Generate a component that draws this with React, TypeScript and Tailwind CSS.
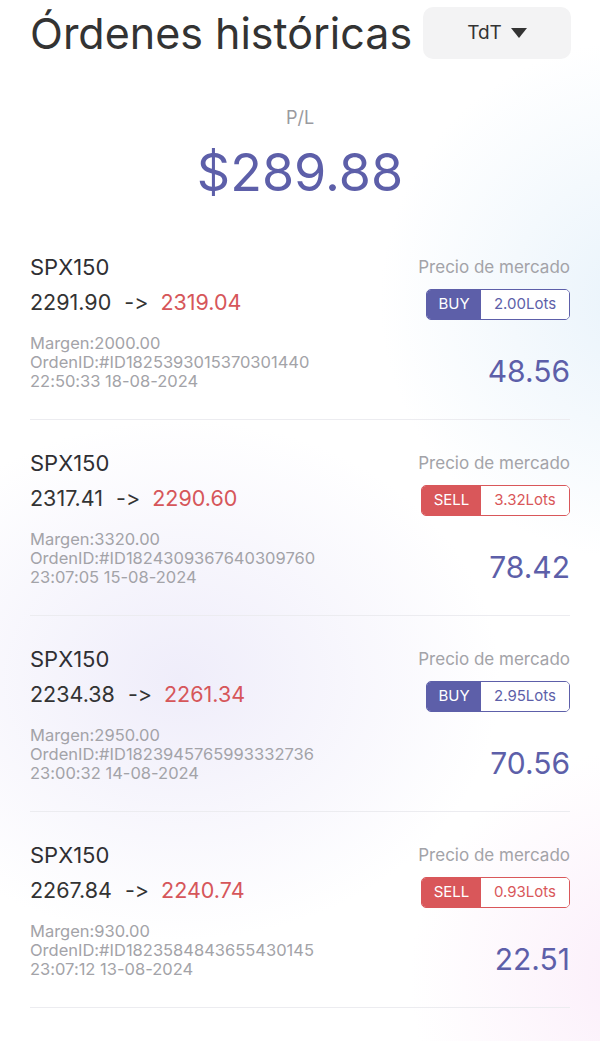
type Order = {
  from: string;
  to: string;
  side: "BUY" | "SELL";
  lots: string;
  margin: string;
  id: string;
  time: string;
  pl: string;
};

const orders: Order[] = [
  { from: "2291.90", to: "2319.04", side: "BUY", lots: "2.00", margin: "2000.00", id: "1825393015370301440", time: "22:50:33 18-08-2024", pl: "48.56" },
  { from: "2317.41", to: "2290.60", side: "SELL", lots: "3.32", margin: "3320.00", id: "1824309367640309760", time: "23:07:05 15-08-2024", pl: "78.42" },
  { from: "2234.38", to: "2261.34", side: "BUY", lots: "2.95", margin: "2950.00", id: "1823945765993332736", time: "23:00:32 14-08-2024", pl: "70.56" },
  { from: "2267.84", to: "2240.74", side: "SELL", lots: "0.93", margin: "930.00", id: "1823584843655430145", time: "23:07:12 13-08-2024", pl: "22.51" },
  { from: "2250.12", to: "2262.80", side: "BUY", lots: "1.20", margin: "1200.00", id: "1823201188431120384", time: "22:41:09 12-08-2024", pl: "15.23" },
];

function SideBadge({ side, lots }: { side: Order["side"]; lots: string }) {
  const buy = side === "BUY";
  return (
    <div
      className={
        buy
          ? "flex h-[31px] overflow-hidden rounded-[5px] border-[1.5px] border-[#5d5fa9] text-[15px]"
          : "flex h-[31px] overflow-hidden rounded-[5px] border-[1.5px] border-[#d9575a] text-[15px]"
      }
    >
      <span
        className={
          buy
            ? "flex w-[54px] items-center justify-center bg-[#5d5fa9] text-white"
            : "flex w-[59px] items-center justify-center bg-[#d9575a] text-white"
        }
      >
        {side}
      </span>
      <span
        className={
          buy
            ? "flex w-[88px] items-center justify-center bg-white text-[#5d5fa9]"
            : "flex w-[88px] items-center justify-center bg-white text-[#d9575a]"
        }
      >
        {lots}Lots
      </span>
    </div>
  );
}

function OrderRow({ order, first }: { order: Order; first: boolean }) {
  return (
    <div
      className={
        first
          ? "flex justify-between border-b border-[#ececf0] pb-[28px]"
          : "flex justify-between border-b border-[#ececf0] pt-[31px] pb-[28px]"
      }
    >
      <div className="flex flex-col">
        <p className="h-[24px] text-[22px] leading-[24px] text-[#2f2f33]">SPX150</p>
        <p className="mt-[9px] h-[28px] text-[21.5px] leading-[28px] text-[#333]">
          {order.from}
          <span className="ml-[13px] mr-[12px]">-&gt;</span>
          <span className="text-[#d6565a]">{order.to}</span>
        </p>
        <div className="mt-[18px] text-[16.5px] leading-[19px] text-[#a3a3a8]">
          <p>Margen:{order.margin}</p>
          <p>OrdenID:#ID{order.id}</p>
          <p>{order.time}</p>
        </div>
      </div>

      <div className="flex flex-col items-end">
        <p className="h-[24px] text-[17px] leading-[24px] text-[#a3a3a8]">
          Precio de mercado
        </p>
        <div className="mt-[10px]">
          <SideBadge side={order.side} lots={order.lots} />
        </div>
        <p className="mt-[33px] text-[30px] leading-[36px] text-[#5d5fa9]">
          {order.pl}
        </p>
      </div>
    </div>
  );
}

export default function App() {
  return (
    <div
      className="h-[1041px] w-[600px] overflow-hidden bg-white bg-[radial-gradient(circle_at_640px_300px,#e9f3fb_0px,rgba(255,255,255,0)_260px),radial-gradient(ellipse_320px_260px_at_180px_680px,#efedfa_0%,rgba(255,255,255,0)_100%),radial-gradient(circle_at_640px_980px,#fbeefa_0px,rgba(255,255,255,0)_230px)] [font-feature-settings:'calt'_0]"
      style={{ fontFamily: "Inter, 'Noto Sans', Arial, sans-serif" }}
    >
      <div className="flex items-center justify-between pl-[30px] pr-[29px] pt-[7px]">
        <h1 className="text-[43px] leading-[52px] text-[#333]">Órdenes históricas</h1>
        <button
          type="button"
          className="flex h-[52px] w-[148px] items-center justify-center gap-[9px] rounded-[10px] bg-[#f3f3f4] text-[19px] text-[#333]"
        >
          TdT
          <svg width="16" height="10" viewBox="0 0 16 10">
            <path d="M0 0 H16 L8 10 Z" fill="#333" />
          </svg>
        </button>
      </div>

      <div className="mt-[47px] flex flex-col items-center">
        <p className="text-[18px] leading-[24px] text-[#9a9a9f]">P/L</p>
        <p className="mt-[15px] text-[52px] leading-[56px] text-[#5d5fa9]">$289.88</p>
      </div>

      <div className="mt-[54px] px-[30px]">
        {orders.map((order, i) => (
          <OrderRow key={order.id} order={order} first={i === 0} />
        ))}
      </div>
    </div>
  );
}
